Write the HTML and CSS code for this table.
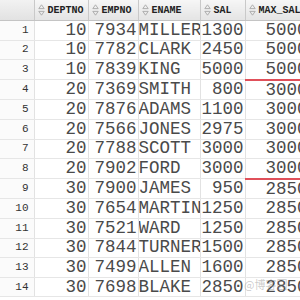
FILE: index.html
```html
<!DOCTYPE html>
<html>
<head>
<meta charset="utf-8">
<link rel="stylesheet" href="styles.css">
</head>
<body>
<div class="grid-wrap">
<table class="grid">
<colgroup>
<col class="c-num"><col class="c-dept"><col class="c-emp"><col class="c-name"><col class="c-sal"><col class="c-max">
</colgroup>
<thead>
<tr>
<th class="corner"></th>
<th><span class="sort"><svg width="7" height="12" viewBox="0 0 7 12"><path d="M3.5 0.8 L6.2 4.6 H0.8 Z M3.5 11.2 L6.2 7.4 H0.8 Z" fill="none" stroke="#a8a8a8" stroke-width="0.9"/></svg></span>DEPTNO</th>
<th><span class="sort"><svg width="7" height="12" viewBox="0 0 7 12"><path d="M3.5 0.8 L6.2 4.6 H0.8 Z M3.5 11.2 L6.2 7.4 H0.8 Z" fill="none" stroke="#a8a8a8" stroke-width="0.9"/></svg></span>EMPNO</th>
<th><span class="sort"><svg width="7" height="12" viewBox="0 0 7 12"><path d="M3.5 0.8 L6.2 4.6 H0.8 Z M3.5 11.2 L6.2 7.4 H0.8 Z" fill="none" stroke="#a8a8a8" stroke-width="0.9"/></svg></span>ENAME</th>
<th><span class="sort"><svg width="7" height="12" viewBox="0 0 7 12"><path d="M3.5 0.8 L6.2 4.6 H0.8 Z M3.5 11.2 L6.2 7.4 H0.8 Z" fill="none" stroke="#a8a8a8" stroke-width="0.9"/></svg></span>SAL</th>
<th><span class="sort"><svg width="7" height="12" viewBox="0 0 7 12"><path d="M3.5 0.8 L6.2 4.6 H0.8 Z M3.5 11.2 L6.2 7.4 H0.8 Z" fill="none" stroke="#a8a8a8" stroke-width="0.9"/></svg></span>MAX_SAL</th>
</tr>
</thead>
<tbody>
<tr><td class="rn">1</td><td class="n">10</td><td class="n">7934</td><td class="t">MILLER</td><td class="n">1300</td><td class="n">5000</td></tr>
<tr><td class="rn">2</td><td class="n">10</td><td class="n">7782</td><td class="t">CLARK</td><td class="n">2450</td><td class="n">5000</td></tr>
<tr class="mark"><td class="rn">3</td><td class="n">10</td><td class="n">7839</td><td class="t">KING</td><td class="n">5000</td><td class="n red">5000</td></tr>
<tr><td class="rn">4</td><td class="n">20</td><td class="n">7369</td><td class="t">SMITH</td><td class="n">800</td><td class="n">3000</td></tr>
<tr><td class="rn">5</td><td class="n">20</td><td class="n">7876</td><td class="t">ADAMS</td><td class="n">1100</td><td class="n">3000</td></tr>
<tr><td class="rn">6</td><td class="n">20</td><td class="n">7566</td><td class="t">JONES</td><td class="n">2975</td><td class="n">3000</td></tr>
<tr><td class="rn">7</td><td class="n">20</td><td class="n">7788</td><td class="t">SCOTT</td><td class="n">3000</td><td class="n">3000</td></tr>
<tr><td class="rn">8</td><td class="n">20</td><td class="n">7902</td><td class="t">FORD</td><td class="n">3000</td><td class="n red">3000</td></tr>
<tr><td class="rn">9</td><td class="n">30</td><td class="n">7900</td><td class="t">JAMES</td><td class="n">950</td><td class="n">2850</td></tr>
<tr><td class="rn">10</td><td class="n">30</td><td class="n">7654</td><td class="t">MARTIN</td><td class="n">1250</td><td class="n">2850</td></tr>
<tr><td class="rn">11</td><td class="n">30</td><td class="n">7521</td><td class="t">WARD</td><td class="n">1250</td><td class="n">2850</td></tr>
<tr><td class="rn">12</td><td class="n">30</td><td class="n">7844</td><td class="t">TURNER</td><td class="n">1500</td><td class="n">2850</td></tr>
<tr><td class="rn">13</td><td class="n">30</td><td class="n">7499</td><td class="t">ALLEN</td><td class="n">1600</td><td class="n">2850</td></tr>
<tr><td class="rn">14</td><td class="n">30</td><td class="n">7698</td><td class="t">BLAKE</td><td class="n">2850</td><td class="n">2850</td></tr>
</tbody>
</table>
<div class="watermark">@博客园</div>
</div>
</body>
</html>
```
FILE: styles.css
```css
html, body {
  margin: 0;
  padding: 0;
  background: #ffffff;
  overflow: hidden;
}
.grid-wrap {
  position: relative;
  width: 300px;
  height: 300px;
  overflow: hidden;
}
.grid {
  border-collapse: collapse;
  table-layout: fixed;
  width: 309px;
}
.c-num { width: 34px; }
.c-dept { width: 54px; }
.c-emp { width: 50px; }
.c-name { width: 62px; }
.c-sal { width: 45px; }
.c-max { width: 64px; }

.grid th {
  height: 20px;
  padding: 0 0 0 3px;
  background: linear-gradient(#f6f6f6, #e4e4e4);
  border-right: 1px solid #c9c9c9;
  border-bottom: 1px solid #c4c4c4;
  font-family: "Liberation Mono", monospace;
  font-weight: bold;
  font-size: 10px;
  line-height: 12px;
  color: #222;
  text-align: left;
  white-space: nowrap;
  overflow: hidden;
}
.grid th.corner {
  padding: 0;
  background: linear-gradient(#f2f2f2, #e2e2e2);
}
.sort {
  display: inline-block;
  vertical-align: middle;
  margin-right: 3px;
  line-height: 0;
}
.sort svg { display: block; }

.grid td {
  height: 18.6px;
  padding: 0;
  border-right: 1px solid #e2e2e2;
  border-bottom: 1px solid #e6e6e6;
  font-family: "Liberation Mono", "Courier New", monospace;
  font-size: 17.5px;
  color: #4a4a4a;
  white-space: nowrap;
  overflow: hidden;
  line-height: 15px;
}
.grid td.rn {
  font-size: 11px;
  text-align: right;
  padding-right: 5px;
  color: #333;
  background: #fbfbfb;
}
.grid td.n {
  text-align: right;
  padding-right: 1px;
}
.grid td.t {
  text-align: left;
  padding-left: 0;
}
.grid td.red {
  border-bottom: 2px solid #e0505a;
}
.watermark {
  position: absolute;
  left: 244px;
  top: 276px;
  font-family: "Noto Sans CJK SC", sans-serif;
  font-size: 11px;
  color: rgba(140, 140, 140, 0.45);
  white-space: nowrap;
}
```
